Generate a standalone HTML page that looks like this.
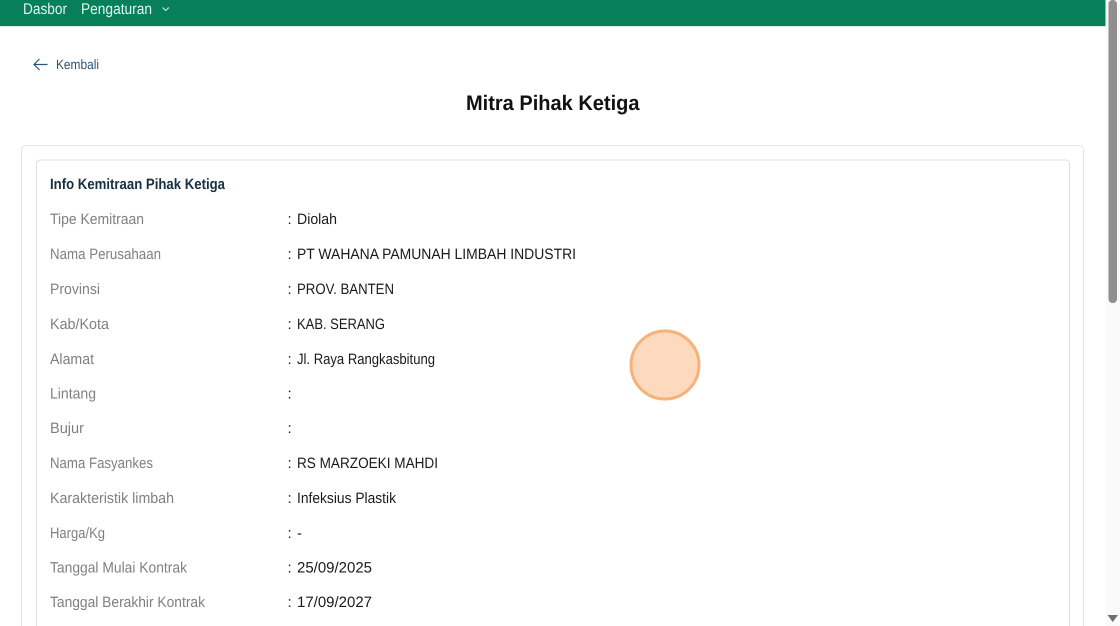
<!DOCTYPE html>
<html lang="id">
<head>
<meta charset="utf-8">
<title>Mitra Pihak Ketiga</title>
<style>
html,body{margin:0;padding:0;width:1120px;height:626px;overflow:hidden;background:#fff}
svg{display:block}
text{font-family:"Liberation Sans",sans-serif;text-rendering:geometricPrecision}
.l{font-size:15px;fill:#808080}
.v{font-size:15px;fill:#1a1a1a}
</style>
</head>
<body>
<svg width="1120" height="626" viewBox="0 0 1120 626" xmlns="http://www.w3.org/2000/svg">
<rect x="1106" y="0" width="14" height="626" fill="#fafafa"/>
<rect x="0" y="0" width="1105.5" height="26" fill="#07805a"/>
<rect x="0" y="26" width="1105.5" height="1" fill="#d5efe6"/>
<rect x="1108.5" y="0" width="8.5" height="303" rx="4" fill="#8f8f8f"/>
<path d="M1107.5 615H1118L1112.75 622Z" fill="#6f6f6f"/>

<text x="23" y="14" font-size="15.5" fill="#e3f5ee" textLength="44" lengthAdjust="spacingAndGlyphs">Dasbor</text>
<text x="81" y="14" font-size="15.5" fill="#e3f5ee" textLength="71" lengthAdjust="spacingAndGlyphs">Pengaturan</text>
<path d="M162.5 7.5L165.7 10.5L168.9 7.5" fill="none" stroke="#a9dcc8" stroke-width="1.2"/>

<path d="M47.5 64.5H34M39.5 59L34 64.5L39.5 70" fill="none" stroke="#2a5378" stroke-width="1.2"/>
<text x="56" y="69" font-size="13.5" fill="#2a5378" textLength="43" lengthAdjust="spacingAndGlyphs">Kembali</text>

<text x="466" y="110" font-size="21" font-weight="700" fill="#111" textLength="173.5" lengthAdjust="spacingAndGlyphs">Mitra Pihak Ketiga</text>

<path d="M21.5 626V149.5a4 4 0 0 1 4-4H1079.5a4 4 0 0 1 4 4V626" fill="none" stroke="#e6e6e6"/>
<path d="M36.5 626V164a4 4 0 0 1 4-4H1065.5a4 4 0 0 1 4 4V626" fill="none" stroke="#dedede"/>

<text x="50" y="189" font-size="15" font-weight="700" fill="#15303f" textLength="175" lengthAdjust="spacingAndGlyphs">Info Kemitraan Pihak Ketiga</text>

<text class="l" x="50" y="224" textLength="94" lengthAdjust="spacingAndGlyphs">Tipe Kemitraan</text>
<text class="v" x="287.5" y="224">:</text>
<text class="v" x="297" y="224" textLength="40" lengthAdjust="spacingAndGlyphs">Diolah</text>

<text class="l" x="50" y="259" textLength="111" lengthAdjust="spacingAndGlyphs">Nama Perusahaan</text>
<text class="v" x="287.5" y="259">:</text>
<text class="v" x="297" y="259" textLength="279" lengthAdjust="spacingAndGlyphs">PT WAHANA PAMUNAH LIMBAH INDUSTRI</text>

<text class="l" x="50" y="294" textLength="50" lengthAdjust="spacingAndGlyphs">Provinsi</text>
<text class="v" x="287.5" y="294">:</text>
<text class="v" x="297" y="294" textLength="97" lengthAdjust="spacingAndGlyphs">PROV. BANTEN</text>

<text class="l" x="50" y="329" textLength="59" lengthAdjust="spacingAndGlyphs">Kab/Kota</text>
<text class="v" x="287.5" y="329">:</text>
<text class="v" x="297" y="329" textLength="88" lengthAdjust="spacingAndGlyphs">KAB. SERANG</text>

<text class="l" x="50" y="364" textLength="44" lengthAdjust="spacingAndGlyphs">Alamat</text>
<text class="v" x="287.5" y="364">:</text>
<text class="v" x="297" y="364" textLength="138" lengthAdjust="spacingAndGlyphs">Jl. Raya Rangkasbitung</text>

<text class="l" x="50" y="398.5" textLength="46" lengthAdjust="spacingAndGlyphs">Lintang</text>
<text class="v" x="287.5" y="398.5">:</text>

<text class="l" x="50" y="433" textLength="34" lengthAdjust="spacingAndGlyphs">Bujur</text>
<text class="v" x="287.5" y="433">:</text>

<text class="l" x="50" y="468" textLength="103" lengthAdjust="spacingAndGlyphs">Nama Fasyankes</text>
<text class="v" x="287.5" y="468">:</text>
<text class="v" x="297" y="468" textLength="141" lengthAdjust="spacingAndGlyphs">RS MARZOEKI MAHDI</text>

<text class="l" x="50" y="503" textLength="124" lengthAdjust="spacingAndGlyphs">Karakteristik limbah</text>
<text class="v" x="287.5" y="503">:</text>
<text class="v" x="297" y="503" textLength="99" lengthAdjust="spacingAndGlyphs">Infeksius Plastik</text>

<text class="l" x="50" y="538" textLength="55" lengthAdjust="spacingAndGlyphs">Harga/Kg</text>
<text class="v" x="287.5" y="538">:</text>
<text class="v" x="297" y="538">-</text>

<text class="l" x="50" y="572.5" textLength="137" lengthAdjust="spacingAndGlyphs">Tanggal Mulai Kontrak</text>
<text class="v" x="287.5" y="572.5">:</text>
<text class="v" x="297" y="572.5" textLength="75" lengthAdjust="spacingAndGlyphs">25/09/2025</text>

<text class="l" x="50" y="607" textLength="155" lengthAdjust="spacingAndGlyphs">Tanggal Berakhir Kontrak</text>
<text class="v" x="287.5" y="607">:</text>
<text class="v" x="297" y="607" textLength="75" lengthAdjust="spacingAndGlyphs">17/09/2027</text>

<circle cx="665" cy="365" r="34" fill="#fdd9bd" stroke="#f5b27a" stroke-width="3"/>
</svg>
</body>
</html>
